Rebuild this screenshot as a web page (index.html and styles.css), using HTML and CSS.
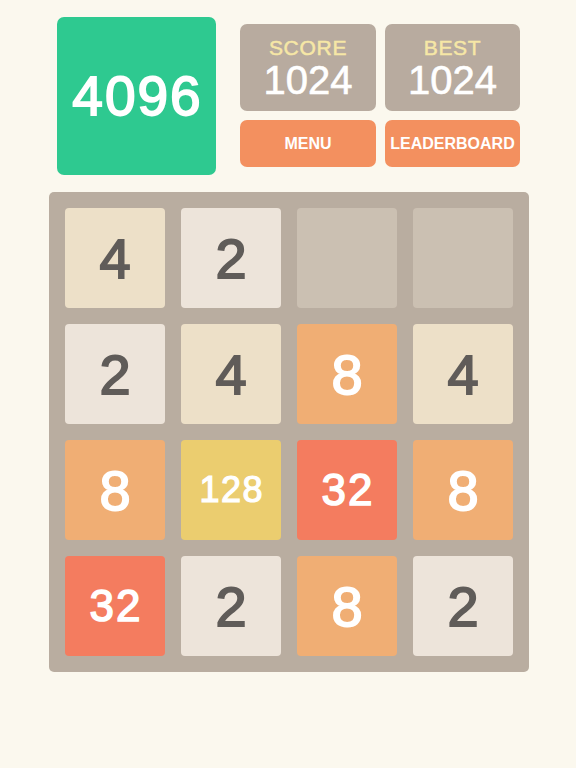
FILE: index.html
```html
<!DOCTYPE html>
<html>
<head>
<meta charset="utf-8">
<link rel="stylesheet" href="styles.css">
</head>
<body>
<div class="page">
  <header class="top">
    <div class="logo">4096</div>
    <div class="panel">
      <div class="stat"><span class="label">SCORE</span><span class="value">1024</span></div>
      <div class="stat"><span class="label">BEST</span><span class="value">1024</span></div>
      <div class="btn">MENU</div>
      <div class="btn">LEADERBOARD</div>
    </div>
  </header>
  <main class="board">
    <div class="tile t4">4</div>
    <div class="tile t2">2</div>
    <div class="tile empty"></div>
    <div class="tile empty"></div>

    <div class="tile t2">2</div>
    <div class="tile t4">4</div>
    <div class="tile t8">8</div>
    <div class="tile t4">4</div>

    <div class="tile t8">8</div>
    <div class="tile t128">128</div>
    <div class="tile t32">32</div>
    <div class="tile t8">8</div>

    <div class="tile t32">32</div>
    <div class="tile t2">2</div>
    <div class="tile t8">8</div>
    <div class="tile t2">2</div>
  </main>
</div>
</body>
</html>
```

FILE: styles.css
```css
html, body {
  margin: 0;
  padding: 0;
  background: #fbf8ee;
  font-family: "Liberation Sans", Arial, sans-serif;
}
.page {
  width: 576px;
  display: flex;
  flex-direction: column;
  align-items: center;
}
.top {
  display: flex;
  margin-top: 17px;
  margin-left: 1px;
  gap: 24px;
}
.logo {
  width: 159px;
  height: 158px;
  background: #2ec990;
  border-radius: 7px;
  color: #fff;
  font-size: 55px;
  -webkit-text-stroke: 1.8px #fff;
  letter-spacing: 2px;
  text-indent: 2px;
  display: flex;
  align-items: center;
  justify-content: center;
}
.panel {
  margin-top: 7px;
  display: grid;
  grid-template-columns: 136px 135px;
  grid-template-rows: 87px 47px;
  column-gap: 9px;
  row-gap: 9px;
  align-self: flex-start;
}
.stat {
  background: #b8ab9f;
  border-radius: 7px;
  display: flex;
  flex-direction: column;
  align-items: center;
  padding-top: 13px;
  box-sizing: border-box;
}
.label {
  color: #f6e7a6;
  font-size: 21px;
  line-height: 22px;
  letter-spacing: 0.7px;
  -webkit-text-stroke: 0.5px #f6e7a6;
}
.value {
  color: #fff;
  font-size: 40px;
  line-height: 38px;
  margin-top: 2px;
  -webkit-text-stroke: 0.6px #fff;
}
.btn {
  background: #f3905f;
  border-radius: 7px;
  color: #fff;
  font-weight: bold;
  font-size: 16px;
  display: flex;
  align-items: center;
  justify-content: center;
}
.board {
  margin-top: 17px;
  margin-left: 2px;
  width: 480px;
  height: 480px;
  box-sizing: border-box;
  padding: 16px;
  background: #b9ada0;
  border-radius: 5px;
  display: grid;
  grid-template-columns: repeat(4, 100px);
  grid-template-rows: repeat(4, 100px);
  gap: 16px;
}
.tile {
  border-radius: 4px;
  display: flex;
  align-items: center;
  justify-content: center;
  font-size: 56px;
  color: #fff;
  -webkit-text-stroke: 1.8px #fff;
}
.empty { background: #cbc0b2; }
.t2 { background: #ede4da; color: #605c59; -webkit-text-stroke-color: #605c59; }
.t4 { background: #ede0c8; color: #605c59; -webkit-text-stroke-color: #605c59; }
.t8 { background: #f0ae74; }
.t32 { background: #f47c5f; font-size: 44px; letter-spacing: 2px; text-indent: 2px; -webkit-text-stroke-width: 1.5px; }
.t128 { background: #ebcd6f; font-size: 36px; letter-spacing: 1.5px; text-indent: 1.5px; -webkit-text-stroke-width: 1.2px; }
```
